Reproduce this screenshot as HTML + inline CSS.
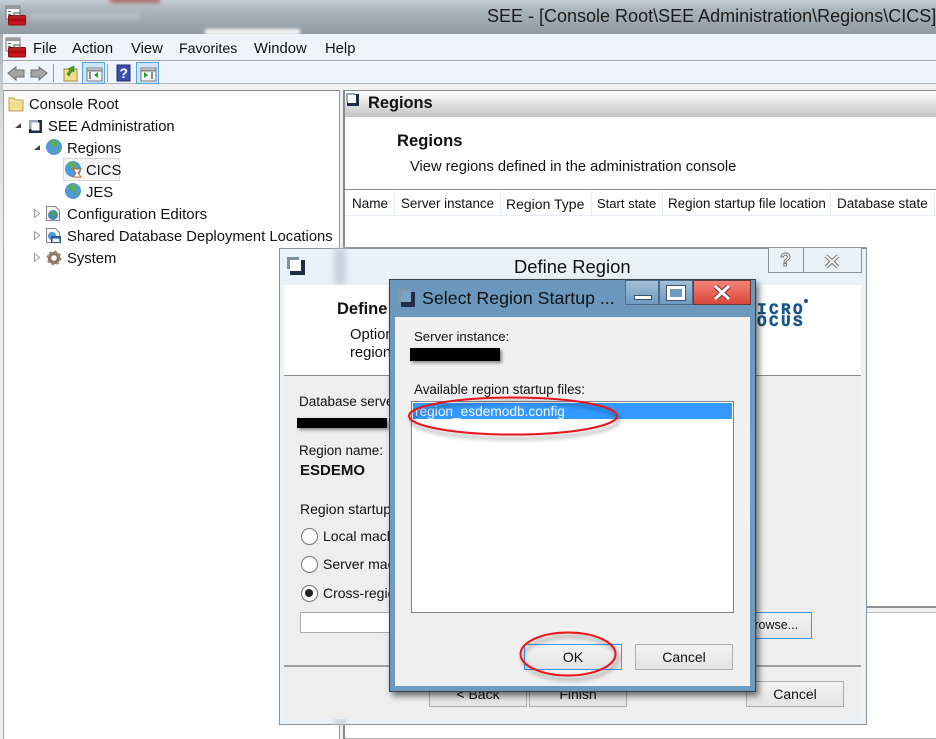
<!DOCTYPE html>
<html><head><meta charset="utf-8"><style>
html,body{margin:0;padding:0;background:#fff}
#r{position:relative;width:936px;height:739px;overflow:hidden;background:#fff;font-family:"Liberation Sans",sans-serif;font-size:14.8px;color:#111}
#r div,#r svg{position:absolute}
.t{white-space:nowrap;line-height:20px;height:20px}
.b{font-weight:bold}
.btn{box-sizing:border-box;border:1px solid #adadad;background:linear-gradient(#f3f3f3,#e4e4e4);text-align:center;font-size:14px}
.rad{width:15px;height:15px;border:1px solid #777;border-radius:50%;background:#fdfdfd}
</style></head><body><div id="r">
<!-- title bar -->
<div style="left:0;top:0;width:936px;height:34px;background:linear-gradient(#c4ced6 0,#aab4bb 30%,#8f9aa2 100%)"></div>
<div style="left:0;top:34px;width:3px;height:705px;background:linear-gradient(#a6aeb4,#d8dcde 12%,#eeeeee 30%)"></div>
<div style="left:110px;top:-3px;width:50px;height:6px;background:#a66;filter:blur(2px)"></div>
<div style="left:30px;top:12px;width:110px;height:7px;background:#b8c0c6;filter:blur(3px)"></div>
<div style="left:205px;top:29px;width:95px;height:6px;background:#f4f6f8;filter:blur(1.5px)"></div>
<div class="t" style="left:487px;top:6px;font-size:18px;line-height:20px;color:#1c1c1c">SEE - [Console Root\SEE Administration\Regions\CICS]</div>
<svg style="left:5px;top:5px" width="22" height="21" viewBox="0 0 22 21"><rect x="1" y="1" width="14" height="13" fill="#f4f4f4" stroke="#777"/><rect x="1" y="1" width="14" height="3" fill="#999"/><rect x="3" y="6" width="3" height="1" fill="#777"/><rect x="3" y="9" width="3" height="1" fill="#777"/><rect x="3" y="12" width="3" height="1" fill="#777"/><rect x="3.500" y="10.500" width="17" height="9.500" rx="1" fill="#c8141c" stroke="#8a0c12"/><rect x="9" y="8" width="6" height="3" fill="none" stroke="#555"/><path d="M4 15h16" stroke="#7a0a0e"/></svg>
<!-- menu -->
<div style="left:3px;top:34px;width:933px;height:26px;background:#eef4fc"></div>
<div style="left:3px;top:60px;width:933px;height:1px;background:#a8a8a8"></div>
<div style="left:3px;top:61px;width:933px;height:22px;background:#eef4fc"></div>
<div style="left:3px;top:83px;width:933px;height:1px;background:#b4b4b4"></div>
<div style="left:3px;top:84px;width:933px;height:7px;background:#f0f0f0"></div>
<svg style="left:5px;top:37px" width="22" height="21" viewBox="0 0 22 21"><rect x="1" y="1" width="14" height="13" fill="#f4f4f4" stroke="#777"/><rect x="1" y="1" width="14" height="3" fill="#999"/><rect x="3" y="6" width="3" height="1" fill="#777"/><rect x="3" y="9" width="3" height="1" fill="#777"/><rect x="3" y="12" width="3" height="1" fill="#777"/><rect x="3.500" y="10.500" width="17" height="9.500" rx="1" fill="#c8141c" stroke="#8a0c12"/><rect x="9" y="8" width="6" height="3" fill="none" stroke="#555"/><path d="M4 15h16" stroke="#7a0a0e"/></svg>
<div class="t" style="left:33px;top:39px">File</div>
<div class="t" style="left:72px;top:39px">Action</div>
<div class="t" style="left:131px;top:39px">View</div>
<div class="t" style="left:179px;top:39px;font-size:14.2px">Favorites</div>
<div class="t" style="left:254px;top:39px">Window</div>
<div class="t" style="left:325px;top:39px">Help</div>
<!-- toolbar -->
<svg style="left:0;top:61px" width="170" height="23" viewBox="0 61 170 23">
<path d="M8 73l8-6v3h8v7h-8v3z" fill="#a4a4a4" stroke="#707070"/>
<path d="M47 73l-8-6v3h-8v7h8v3z" fill="#a4a4a4" stroke="#707070"/>
<path d="M53.500 64v18" stroke="#999"/>
<path d="M64 69h13v12H64z" fill="#f3dd8f" stroke="#a08a40"/>
<path d="M67 74l3-4-2-1 6-3 0 6-2-1-3 5z" fill="#4aa32f" stroke="#2d7a1a" stroke-width=".6"/>
<rect x="82.500" y="62.500" width="22" height="21" fill="#cfe5fb" stroke="#5aa3ec"/>
<rect x="87" y="68" width="15" height="13" fill="#f4f6f8" stroke="#777"/><path d="M87 70.500h15" stroke="#888" stroke-width="2"/><path d="M90 72v7" stroke="#888" stroke-width="2"/><path d="M98 72v6l-4-3z" fill="#2ca02c"/>
<path d="M107.500 64v18" stroke="#999"/>
<rect x="117" y="65" width="13" height="16" fill="#3c50a8" stroke="#1c2c70"/>
<text x="119.500" y="78" font-family="Liberation Sans" font-weight="bold" font-size="14" fill="#fff">?</text>
<rect x="136.500" y="62.500" width="22" height="21" fill="#cfe5fb" stroke="#5aa3ec"/>
<rect x="141" y="68" width="15" height="13" fill="#f4f6f8" stroke="#777"/><path d="M141 70.500h15" stroke="#888" stroke-width="2"/><path d="M152 72v7" stroke="#888" stroke-width="2"/><path d="M144 72v6l4-3z" fill="#2ca02c"/>
</svg>
<!-- tree pane -->
<div style="left:3px;top:90px;width:337px;height:649px;background:#fff;border-top:1px solid #8a8a8a;border-right:1px solid #9a9a9a;box-sizing:border-box"></div>
<div style="left:3px;top:90px;width:1px;height:649px;background:#a8a8a8"></div>
<div style="left:340px;top:91px;width:3px;height:648px;background:#f0f0f0"></div>
<div style="left:63px;top:158px;width:55px;height:21px;border:1px solid #d9d9d9;background:#f4f4f4"></div>
<svg style="left:0;top:90px" width="130" height="180" viewBox="0 90 130 180">
<path d="M9 98h5l1 2h8v11H9z" fill="#f5dc8f" stroke="#b9a055"/><path d="M9.500 101h13" stroke="#fff2c0"/>
<path d="M15 128l6-5v5z" fill="#444"/>
<rect x="29" y="120" width="13" height="13" fill="#1e2c44"/><rect x="29" y="120" width="9" height="9" fill="#9aa7b7"/><rect x="31.500" y="122.500" width="8" height="8" fill="#fff"/>
<path d="M34 150l6-5v5z" fill="#444"/>
<circle cx="54" cy="147" r="8" fill="#4f9bd8"/><path d="M50 141c4-2 7 0 8 2-2 2-1 4-4 5-2-1-4-4-4-7zM57 149l3-1-2 5z" fill="#5fae50"/>
<circle cx="73" cy="169" r="8" fill="#4f9bd8"/><path d="M69 163c4-2 7 0 8 2-2 2-1 4-4 5-2-1-4-4-4-7z" fill="#5fae50"/><path d="M73 169h8l-3 4 3 4h-8l3-4z" fill="#fff" stroke="#b06830"/>
<circle cx="73" cy="191" r="8" fill="#4f9bd8"/><path d="M69 185c4-2 7 0 8 2-2 2-1 4-4 5-2-1-4-4-4-7zM76 193l3-1-2 5z" fill="#5fae50"/>
<path d="M34.500 209.500l5 4-5 4z" fill="#fff" stroke="#9a9a9a"/>
<path d="M34.500 231.500l5 4-5 4z" fill="#fff" stroke="#9a9a9a"/>
<path d="M34.500 253.500l5 4-5 4z" fill="#fff" stroke="#9a9a9a"/>
<path d="M46.500 206.500h9l4 4v10h-13z" fill="#f6f6f6" stroke="#888"/><circle cx="53" cy="215" r="5" fill="#3f8ac8"/><path d="M50 212c3-1 5 0 6 2l-4 4z" fill="#55a048"/>
<path d="M46.500 228.500h9l4 4v10h-13z" fill="#f6f6f6" stroke="#888"/><circle cx="52" cy="236" r="4" fill="#4f9bd8"/><rect x="51" y="236" width="10" height="7" fill="#2a5a90"/><rect x="52.500" y="238.500" width="7" height="3.500" fill="#eee"/>
<circle cx="54" cy="258" r="4.500" fill="none" stroke="#8d7a68" stroke-width="3.500"/><circle cx="54" cy="258" r="6.500" fill="none" stroke="#a08c78" stroke-width="2" stroke-dasharray="2.500 2.600"/>
</svg>
<div class="t" style="left:29px;top:95px">Console Root</div>
<div class="t" style="left:48px;top:117px">SEE Administration</div>
<div class="t" style="left:67px;top:139px">Regions</div>
<div class="t" style="left:86px;top:161px">CICS</div>
<div class="t" style="left:86px;top:183px">JES</div>
<div class="t" style="left:67px;top:205px;font-size:15px">Configuration Editors</div>
<div class="t" style="left:67px;top:227px">Shared Database Deployment Locations</div>
<div class="t" style="left:67px;top:249px">System</div>
<!-- right pane -->
<div style="left:343px;top:90px;width:593px;height:649px;background:#fff;border-top:1px solid #8a8a8a;border-left:2px solid #8a8a8a;box-sizing:border-box"></div>
<div style="left:345px;top:92px;width:591px;height:25px;background:linear-gradient(#fff,#c2c2c2)"></div>
<svg style="left:346px;top:93px" width="16" height="16"><rect x="1" y="1" width="12" height="12" fill="#1e2c44"/><rect x="0" y="0" width="9" height="9" fill="#9aa7b7"/><rect x="2" y="2" width="8" height="8" fill="#fff"/></svg>
<div class="t b" style="left:368px;top:93px;font-size:16.400px">Regions</div>
<div class="t b" style="left:397px;top:131px;font-size:16.600px">Regions</div>
<div class="t" style="left:410px;top:157px;font-size:14.700px">View regions defined in the administration console</div>
<div style="left:345px;top:189px;width:591px;height:1px;background:#8a8a8a"></div>
<div style="left:345px;top:215px;width:591px;height:1px;background:#e4edf6"></div>
<div style="left:394px;top:191px;width:1px;height:24px;background:#e4edf6"></div>
<div style="left:500px;top:191px;width:1px;height:24px;background:#e4edf6"></div>
<div style="left:591px;top:191px;width:1px;height:24px;background:#e4edf6"></div>
<div style="left:662px;top:191px;width:1px;height:24px;background:#e4edf6"></div>
<div style="left:830px;top:191px;width:1px;height:24px;background:#e4edf6"></div>
<div style="left:934px;top:191px;width:1px;height:24px;background:#e4edf6"></div>
<div class="t" style="left:352px;top:194px;font-size:13.500px">Name</div>
<div class="t" style="left:401px;top:194px;font-size:13.400px">Server instance</div>
<div class="t" style="left:506px;top:194px;font-size:14px">Region Type</div>
<div class="t" style="left:597px;top:194px;font-size:13px">Start state</div>
<div class="t" style="left:668px;top:194px;font-size:13.400px">Region startup file location</div>
<div class="t" style="left:837px;top:194px;font-size:13.500px">Database state</div>
<div style="left:345px;top:247px;width:522px;height:1px;background:#9a9a9a"></div>
<div style="left:867px;top:606px;width:69px;height:2px;background:#8d9099"></div>
<div style="left:867px;top:608px;width:69px;height:4px;background:#f0f0f0;border-bottom:1px solid #c0c0c0"></div>
<div style="left:345px;top:738px;width:591px;height:1px;background:#b0b0b0"></div>
<!-- Define Region dialog -->
<div style="left:279px;top:248px;width:588px;height:477px;box-sizing:border-box;border:1px solid #8b929c;background:#e9f1f9"></div>
<div style="left:334px;top:249px;width:12px;height:36px;background:#c6d2dc;filter:blur(3px)"></div>
<div style="left:334px;top:719px;width:12px;height:5px;background:#c6d2dc;filter:blur(2px)"></div>
<svg style="left:287px;top:257px" width="19" height="19"><rect x="3" y="3" width="15" height="15" fill="#1e2c44"/><rect x="0" y="0" width="12" height="12" fill="#7e8fa3"/><rect x="3" y="3" width="11" height="11" fill="#fff"/></svg>
<div class="t" style="left:514px;top:257px;font-size:18.400px">Define Region</div>
<div style="left:768px;top:248px;width:94px;height:25px;box-sizing:border-box;border:1px solid #8b929c;border-top:0;background:#e9f1f9"></div>
<div style="left:803px;top:248px;width:1px;height:25px;background:#8b929c"></div>
<div class="t b" style="left:780px;top:250px;font-size:18px;color:#fff;-webkit-text-stroke:1px #777">?</div>
<svg style="left:824px;top:254px" width="16" height="15"><path d="M2 2l12 11M14 2L2 13" stroke="#777" stroke-width="4"/><path d="M2 2l12 11M14 2L2 13" stroke="#f4f6f8" stroke-width="2"/></svg>
<div style="left:284px;top:285px;width:577px;height:90px;background:#fff"></div>
<div style="left:284px;top:375px;width:577px;height:1px;background:#8a8a8a"></div>
<div style="left:284px;top:376px;width:577px;height:343px;background:#eeeeee"></div>
<div style="left:284px;top:665px;width:577px;height:2px;background:#a0a0a0"></div>
<div class="t b" style="left:337px;top:299px;font-size:16.500px">Define Region</div>
<div class="t" style="left:350px;top:325px">Optional region</div>
<div class="t" style="left:350px;top:343px">region startup</div>
<div class="t b" style="left:745px;top:302px;font-size:16px;letter-spacing:2.400px;line-height:16px;color:#17568a;-webkit-text-stroke:.5px #17568a;font-family:'Liberation Mono',monospace">MICRO</div>
<div class="t b" style="left:745px;top:314px;font-size:16px;letter-spacing:2.400px;line-height:16px;color:#17568a;-webkit-text-stroke:.5px #17568a;font-family:'Liberation Mono',monospace">FOCUS</div>
<div style="left:804px;top:299px;width:4px;height:4px;border-radius:50%;background:#17568a"></div>
<div class="t" style="left:299px;top:392px;font-size:13.500px">Database server:</div>
<div style="left:297px;top:418px;width:90px;height:10px;background:#000;box-shadow:2px 2px 3px #888"></div>
<div class="t" style="left:299px;top:441px;font-size:13.500px">Region name:</div>
<div class="t b" style="left:300px;top:461px;font-size:15px">ESDEMO</div>
<div class="t" style="left:300px;top:499px;font-size:14px">Region startup</div>
<div class="rad" style="left:301px;top:528px"></div>
<div class="rad" style="left:301px;top:556px"></div>
<div class="rad" style="left:301px;top:585px"></div>
<div style="left:305px;top:589px;width:8px;height:8px;border-radius:50%;background:#222"></div>
<div class="t" style="left:323px;top:526px;font-size:14px">Local machine</div>
<div class="t" style="left:323px;top:554px;font-size:14px">Server machine</div>
<div class="t" style="left:323px;top:583px;font-size:14px">Cross-region</div>
<div style="left:300px;top:612px;width:100px;height:21px;box-sizing:border-box;border:1px solid #ababab;background:#fff"></div>
<div class="btn" style="left:700px;top:612px;width:112px;height:27px;border-color:#3a96f0;line-height:25px;text-align:left;padding-left:45px;font-size:12.500px">Browse...</div>
<div class="btn" style="left:429px;top:681px;width:98px;height:26px;line-height:25px">&lt; Back</div>
<div class="btn" style="left:529px;top:681px;width:98px;height:26px;line-height:25px">Finish</div>
<div class="btn" style="left:746px;top:681px;width:98px;height:26px;line-height:25px">Cancel</div>
<!-- Select dialog -->
<div style="left:389px;top:279px;width:367px;height:413px;box-sizing:border-box;border:1px solid #38414c;background:linear-gradient(#6b97bd,#6e9cc2 40%,#6f9ac0);box-shadow:3px 4px 6px rgba(0,0,0,.55)"></div>
<svg style="left:398px;top:289px" width="18" height="19"><rect x="3" y="3" width="14" height="15" fill="#1e2c44"/><rect x="0" y="0" width="12" height="12" fill="#8296ad"/><rect x="3" y="3" width="10" height="10" fill="#7aa3c6"/></svg>
<div class="t" style="left:422px;top:288px;font-size:17.800px">Select Region Startup ...</div>
<div style="left:625px;top:280px;width:34px;height:25px;box-sizing:border-box;border:1px solid #4a6a88;background:linear-gradient(#a2c0d8,#6e9ac0)"></div>
<div style="left:659px;top:280px;width:34px;height:25px;box-sizing:border-box;border:1px solid #4a6a88;background:linear-gradient(#a2c0d8,#6e9ac0)"></div>
<div style="left:693px;top:280px;width:58px;height:25px;box-sizing:border-box;border:1px solid #6a3a34;background:linear-gradient(#f4857a,#d8473a)"></div>
<div style="left:634px;top:295px;width:16px;height:3px;background:#fff;border:1px solid #39536c"></div>
<div style="left:667px;top:286px;width:12px;height:8px;border:3px solid #fff;outline:1px solid #39536c;background:#6e9ac0"></div>
<svg style="left:713px;top:285px" width="18" height="15"><path d="M2 1l14 13M16 1L2 14" stroke="#8a3028" stroke-width="5"/><path d="M2 1l14 13M16 1L2 14" stroke="#fff" stroke-width="3"/></svg>
<div style="left:395px;top:317px;width:355px;height:369px;background:#f0f0f0;border:0"></div>
<div class="t" style="left:414px;top:327px;font-size:13.200px">Server instance:</div>
<div style="left:410px;top:348px;width:90px;height:13px;background:#000;box-shadow:2px 2px 3px #888"></div>
<div class="t" style="left:414px;top:380px;font-size:13.400px">Available region startup files:</div>
<div style="left:411px;top:401px;width:323px;height:212px;box-sizing:border-box;border:1px solid #82828f;background:#fff"></div>
<div style="left:413px;top:403px;width:319px;height:16px;background:#3399ff"></div>
<div class="t" style="left:415px;top:402px;font-size:13.700px;color:#f4f8ff">region_esdemodb.config</div>
<div class="btn" style="left:524px;top:644px;width:98px;height:26px;border-color:#3a96f0;line-height:25px">OK</div>
<div class="btn" style="left:635px;top:644px;width:98px;height:26px;line-height:25px">Cancel</div>
<svg style="left:0;top:0" width="936" height="739"><defs><filter id="s" x="-10%" y="-30%" width="120%" height="160%"><feDropShadow dx="2" dy="4" stdDeviation="2" flood-color="#000" flood-opacity=".4"/></filter></defs>
<ellipse cx="513" cy="416" rx="104" ry="18.500" fill="none" stroke="#e8141c" stroke-width="2" filter="url(#s)"/>
<ellipse cx="568" cy="654" rx="47.500" ry="21.500" fill="none" stroke="#e8141c" stroke-width="2" filter="url(#s)"/>
</svg>
</div></body></html>
